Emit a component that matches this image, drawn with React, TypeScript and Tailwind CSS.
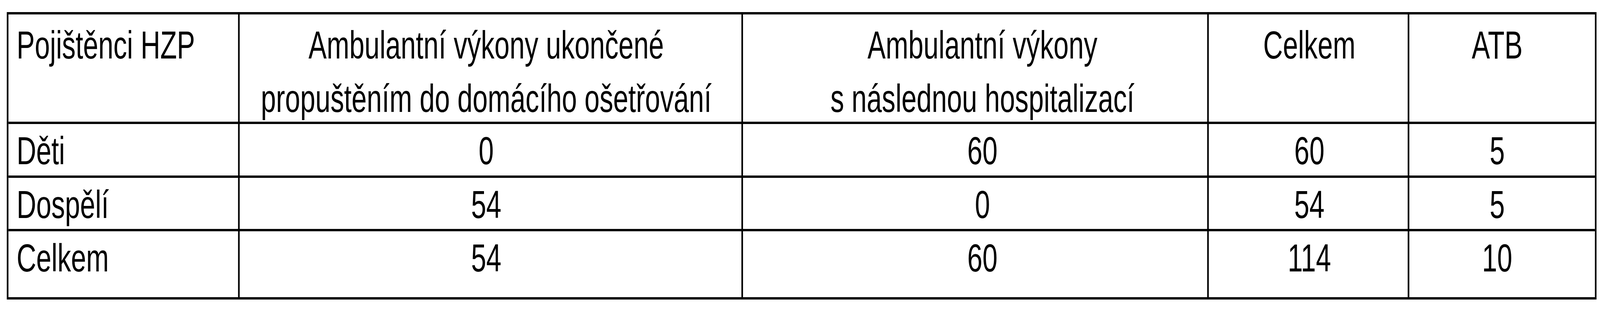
const cellCls = [
  'w-[850px] border-r-[6px] pl-[30px] text-left',
  'w-[1850px] border-r-[6px] pr-[32px] text-center',
  'w-[1712px] border-r-[6px] pl-[54px] text-center',
  'w-[737px] border-r-[6px] pl-[8px] text-center',
  'w-[682px] pr-[36px] text-center',
];

const header = [
  ['Pojištěnci HZP'],
  ['Ambulantní výkony ukončené', 'propuštěním do domácího ošetřování'],
  ['Ambulantní výkony', 's následnou hospitalizací'],
  ['Celkem'],
  ['ATB'],
];

const rows = [
  { h: 'h-[138px] border-b-[6px]', cells: ['Děti', '0', '60', '60', '5'] },
  { h: 'h-[137px] border-b-[6px]', cells: ['Dospělí', '54', '0', '54', '5'] },
  { h: 'h-[169px]', cells: ['Celkem', '54', '60', '114', '10'] },
];

export default function App() {
  return (
    <div className="min-h-screen overflow-hidden bg-white">
      <div className="w-[5881px] origin-top-left scale-x-[0.6965] pt-[31px] pl-[25px] font-['Liberation_Sans',Arial,sans-serif] text-black text-[100px] leading-[137px]">
        <div className="w-[5843px] border-[6px] border-black">
          <div className="flex h-[281px] border-b-[6px] border-black">
            {header.map((lines, i) => (
              <div key={i} className={`${cellCls[i]} shrink-0 border-black pt-[10px] whitespace-nowrap`}>
                {lines.map((l, j) => (
                  <div key={j}>{l}</div>
                ))}
              </div>
            ))}
          </div>
          {rows.map((row, r) => (
            <div key={r} className={`flex ${row.h} border-black`}>
              {row.cells.map((c, i) => (
                <div key={i} className={`${cellCls[i]} shrink-0 border-black whitespace-nowrap`}>
                  {c}
                </div>
              ))}
            </div>
          ))}
        </div>
      </div>
    </div>
  );
}
